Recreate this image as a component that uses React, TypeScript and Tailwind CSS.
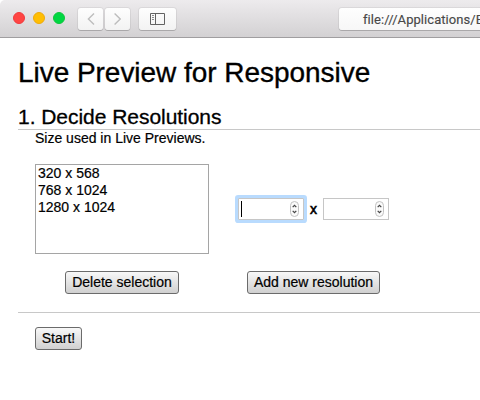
import type { ReactNode } from 'react';

const resolutions = ['320 x 568', '768 x 1024', '1280 x 1024'];

function Button({ children, className = '' }: { children: ReactNode; className?: string }) {
  return (
    <button
      className={`flex h-[23px] shrink-0 items-center justify-center whitespace-nowrap rounded-[3px] border border-[#6b6b6b] bg-gradient-to-b from-[#f8f8f8] to-[#d0d0d0] text-[14px] leading-[21px] ${className}`}
    >
      {children}
    </button>
  );
}

function NumberField({ focused = false }: { focused?: boolean }) {
  return (
    <div
      className={`flex h-[22px] w-[66px] shrink-0 items-center border border-[#c6c6c6] bg-white ${
        focused ? 'rounded-[1px] ring-3 ring-[#b9dbfe]' : ''
      }`}
    >
      {focused && <span className="ml-[2px] h-4 w-px bg-black" />}
      <svg className="mr-[4px] ml-auto h-[16px] w-[9px]" viewBox="0 0 9 16" fill="none">
        <rect x="0.5" y="0.5" width="8" height="15" rx="4" fill="#fafafa" stroke="#c2c2c2" />
        <path d="M2.7 6.2 4.5 4.3 6.3 6.2M2.7 9.8 4.5 11.7 6.3 9.8" stroke="#444" strokeWidth="1.2" />
      </svg>
    </div>
  );
}

function ToolbarButton({ children, className = '' }: { children: ReactNode; className?: string }) {
  return (
    <div
      className={`flex h-[22px] items-center justify-center rounded-[3px] bg-gradient-to-b from-[#fefefe] to-[#f3f3f3] shadow-[0_0_0_1px_rgba(0,0,0,0.06),0_1px_0_0_#b5b3b5] ${className}`}
    >
      {children}
    </div>
  );
}

function Toolbar() {
  return (
    <header className="flex h-[38px] items-start overflow-hidden rounded-tl-[5px] border-b border-[#a09ea0] bg-gradient-to-b from-[#edebed] to-[#d3d1d3]">
      <div className="mt-[12px] ml-[13px] flex gap-[8px]">
        <span className="size-[12px] rounded-full border border-[#f03a3e] bg-[#ff4543]" />
        <span className="size-[12px] rounded-full border border-[#eeaa0c] bg-[#ffbe03]" />
        <span className="size-[12px] rounded-full border border-[#0fc53c] bg-[#00d742]" />
      </div>
      <div className="mt-[8px] ml-[13px] flex gap-[1.5px]">
        <ToolbarButton className="w-[25px]">
          <svg width="8" height="12" viewBox="0 0 8 12" fill="none" stroke="#bdbdbd" strokeWidth="1.4">
            <path d="M7 0.6 1.4 6 7 11.4" />
          </svg>
        </ToolbarButton>
        <ToolbarButton className="w-[25px]">
          <svg width="8" height="12" viewBox="0 0 8 12" fill="none" stroke="#bdbdbd" strokeWidth="1.4">
            <path d="M1.6 0.6 7.2 6 1.6 11.4" />
          </svg>
        </ToolbarButton>
      </div>
      <ToolbarButton className="mt-[8px] ml-[9.5px] w-[37px]">
        <svg width="15" height="12" viewBox="0 0 15 12" fill="none">
          <path d="M0.5 0.5h14v11H0.5zM5.5 0.5v11" stroke="#636363" />
          <path d="M2 2.5h2M2 4.5h2M2 6.5h2" stroke="#8c8c8c" />
        </svg>
      </ToolbarButton>
      <div className="mt-[8px] ml-auto flex h-[22px] w-[141px] shrink-0 items-center overflow-hidden rounded-l-[3px] bg-gradient-to-b from-[#fefefe] to-[#f7f7f7] pl-[24px] shadow-[0_0_0_1px_rgba(0,0,0,0.06),0_1px_0_0_#b5b3b5]">
        <span className="whitespace-nowrap font-['Roboto','Inter',sans-serif] text-[13px] tracking-[0.06px] text-[#484848] [-webkit-text-stroke:0.15px]">
          file:///Applications/B
        </span>
      </div>
    </header>
  );
}

export default function App() {
  return (
    <div className="h-[400px] w-[480px] overflow-hidden bg-white font-['Liberation_Sans',Arial,sans-serif] text-[14px] leading-[17px] text-black">
      <Toolbar />
      <main className="pl-[18px] [-webkit-text-stroke:0.2px]">
        <h1 className="h-[52px] pt-[18px] text-[28px] leading-[34px] tracking-[-0.04px] [-webkit-text-stroke:0.35px]">
          Live Preview for Responsive
        </h1>
        <section className="mt-[14px] border-b border-[#c8c8c8]">
          <h2 className="h-[26px] border-b border-[#c8c8c8] text-[21px] leading-[26px] tracking-[-0.04px] [-webkit-text-stroke:0.3px]">
            1. Decide Resolutions
          </h2>
          <p className="ml-[17px]">Size used in Live Previews.</p>
          <div className="mt-[17px] ml-[17px] flex h-[148px] items-start">
            <div className="flex w-[174px] flex-col">
              <ul className="h-[90px] border border-[#a5a5a5] px-[2px]">
                {resolutions.map((resolution) => (
                  <li key={resolution}>{resolution}</li>
                ))}
              </ul>
              <Button className="mt-[17px] ml-[30px] w-[114px]">Delete selection</Button>
            </div>
            <div className="mt-[34px] ml-[29px] flex w-[151px] flex-col">
              <div className="flex items-center justify-between">
                <NumberField focused />
                <span className="[-webkit-text-stroke:0.6px]">x</span>
                <NumberField />
              </div>
              <Button className="mt-[51px] ml-[9px] w-[133px]">Add new resolution</Button>
            </div>
          </div>
        </section>
        <Button className="mt-[14px] ml-[17px] w-[47px]">Start!</Button>
      </main>
    </div>
  );
}
